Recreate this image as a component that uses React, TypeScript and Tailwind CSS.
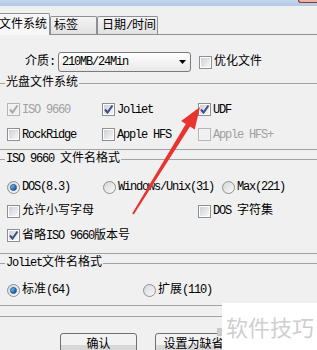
import type { ReactNode } from "react";
import clsx from "clsx";

// latin runs: mono at 6px per char, like the dialog's bitmap font
const M = ({ children }: { children: ReactNode }) => (
  <span className="tracking-[-1.2px]">{children}</span>
);

const CheckBox = ({ checked = false, disabled = false }: { checked?: boolean; disabled?: boolean }) => (
  <span
    className={clsx(
      "relative flex h-[13px] w-[13px] shrink-0 items-center justify-center border",
      disabled ? "border-[#b5b5b5] bg-[#f4f4f4]" : "border-[#8e8f8f] bg-white"
    )}
  >
    <span
      className={clsx(
        "h-[9px] w-[9px]",
        disabled ? "bg-[#f0f0f0]" : "bg-linear-to-br from-[#cdd0d4] to-[#f8f8f8]"
      )}
    />
    {checked && (
      <svg viewBox="0 0 13 13" className="absolute -left-px -top-px h-[13px] w-[13px]">
        <path
          d="M3 6.5 L5.5 9.5 L10.5 2.5"
          fill="none"
          stroke={disabled ? "#a9a9a9" : "#3b4e86"}
          strokeWidth="2"
        />
      </svg>
    )}
  </span>
);

const Radio = ({ selected = false }: { selected?: boolean }) => (
  <span className="flex h-[13px] w-[13px] shrink-0 items-center justify-center rounded-full border border-[#8e8f8f] bg-linear-to-br from-[#d3d5d8] to-[#fbfbfb]">
    {selected && (
      <span className="h-[7px] w-[7px] rounded-full border border-[#1c4f8a] bg-linear-to-br from-[#a9d3f5] via-[#3a86cf] to-[#154f93]" />
    )}
  </span>
);

const Option = ({
  control,
  children,
  className,
  muted,
}: {
  control: ReactNode;
  children: ReactNode;
  className?: string;
  muted?: boolean;
}) => (
  <div className={clsx("flex items-center gap-[2px]", muted && "text-[#a0a0a0]", className)}>
    {control}
    <span className="whitespace-nowrap">{children}</span>
  </div>
);

const Group = ({ title, className, children }: { title: ReactNode; className?: string; children: ReactNode }) => (
  <fieldset className={clsx("border-y border-[#a3a3a3]", className)}>
    <legend className="ml-[5px] px-px leading-[16px]">{title}</legend>
    {children}
  </fieldset>
);

const Button = ({ children }: { children: ReactNode }) => (
  <button className="flex h-[23px] w-[77px] items-center justify-center rounded-[3px] border border-[#707070] bg-linear-to-b from-[#f2f2f2] from-50% to-[#d8d8d8] to-50%">
    {children}
  </button>
);

export default function App() {
  return (
    <div className="relative h-[350px] w-[317px] overflow-hidden bg-[#f0f0f0] font-['Liberation_Mono','Noto_Sans_CJK_SC',monospace] text-[12px] leading-[16px] text-black">
      {/* bottom of the window title bar */}
      <div className="h-[6px] bg-linear-to-b from-[#c3d7ee] to-[#b2c9e4]" />
      <div className="absolute right-0 top-0 h-[3px] w-[19px] rounded-bl-[3px] border-b border-l border-[#8e3b33] bg-[#e9b3a8]" />

      {/* tabs */}
      <div className="flex h-[29px] items-end whitespace-nowrap border-b border-[#8e8f94]">
        <div className="relative z-10 -mb-px -ml-[9px] h-[22px] w-[59px] rounded-t-[2px] border border-b-0 border-[#8e8f94] bg-[#f7f7f7] pl-[7px] pt-[3px]">
          文件系统
        </div>
        <div className="flex h-[18px] w-[47px] items-center rounded-t-[2px] border border-b-0 border-[#8e8f94] bg-linear-to-b from-[#f4f4f4] to-[#e1e1e1] pl-[3px]">
          标签
        </div>
        <div className="flex h-[18px] w-[61px] items-center overflow-hidden rounded-t-[2px] border border-b-0 border-[#8e8f94] bg-linear-to-b from-[#f4f4f4] to-[#e1e1e1] pl-[4px]">
          日期<M>/</M>时间
        </div>
      </div>

      {/* tab page */}
      <div className="pt-[17px]">
        <div className="flex h-[20px] items-center">
          <span className="ml-[25px] w-[33px]">介质:</span>
          <div className="flex h-[20px] w-[133px] items-center justify-between rounded-[3px] border border-[#7b7b7b] bg-linear-to-b from-white to-[#e9e9e9] pl-[3px] pr-[4px]">
            <M>210MB/24Min</M>
            <svg width="7" height="4" viewBox="0 0 7 4">
              <path d="M0 0 H7 L3.5 4 Z" fill="#000" />
            </svg>
          </div>
          <Option className="ml-[8px]" control={<CheckBox />}>
            优化文件
          </Option>
        </div>

        <Group title="光盘文件系统" className="mt-[3px]">
          <div className="pb-[2px] pl-[7px] pt-[6px]">
            <div className="flex h-[25px] items-center">
              <Option className="w-[95px]" muted control={<CheckBox checked disabled />}>
                <M>ISO 9660</M>
              </Option>
              <Option className="w-[96px]" control={<CheckBox checked />}>
                <M>Joliet</M>
              </Option>
              <Option control={<CheckBox checked />}>
                <M>UDF</M>
              </Option>
            </div>
            <div className="flex h-[25px] items-center">
              <Option className="w-[95px]" control={<CheckBox />}>
                <M>RockRidge</M>
              </Option>
              <Option className="w-[96px]" control={<CheckBox />}>
                <M>Apple HFS</M>
              </Option>
              <Option muted control={<CheckBox disabled />}>
                <M>Apple HFS+</M>
              </Option>
            </div>
          </div>
        </Group>

        <Group
          title={
            <>
              <M>ISO 9660 </M>文件名格式
            </>
          }
          className="mt-px"
        >
          <div className="pb-[5px] pl-[7px] pt-[8px]">
            <div className="flex h-[24px] items-center">
              <Option className="w-[96px]" control={<Radio selected />}>
                <M>DOS(8.3)</M>
              </Option>
              <Option className="w-[119px]" control={<Radio />}>
                <M>Windows/Unix(31)</M>
              </Option>
              <Option control={<Radio />}>
                <M>Max(221)</M>
              </Option>
            </div>
            <div className="flex h-[24px] items-center">
              <Option className="w-[191px]" control={<CheckBox />}>
                允许小写字母
              </Option>
              <Option control={<CheckBox />}>
                <M>DOS </M>字符集
              </Option>
            </div>
            <div className="flex h-[25px] items-center">
              <Option control={<CheckBox checked />}>
                省略<M>ISO 9660</M>版本号
              </Option>
            </div>
          </div>
        </Group>

        <Group
          title={
            <>
              <M>Joliet</M>文件名格式
            </>
          }
          className="mt-px"
        >
          <div className="pb-[3px] pl-[7px] pt-[7px]">
            <div className="flex h-[24px] items-center">
              <Option className="w-[136px]" control={<Radio selected />}>
                标准<M>(64)</M>
              </Option>
              <Option control={<Radio />}>
                扩展<M>(110)</M>
              </Option>
            </div>
          </div>
        </Group>

        <div className="mt-[10px] border-t border-[#a3a3a3]" />
      </div>

      <div className="mt-[16px] flex gap-[18px] pl-[60px]">
        <Button>确认</Button>
        <Button>设置为缺省</Button>
      </div>

      {/* annotation arrow */}
      <svg className="pointer-events-none absolute left-0 top-0" width="317" height="350" viewBox="0 0 317 350">
        <polygon
          points="132.2,213.5 185.8,123.9 181.1,121 200,107 194.7,129.4 190,126.5 133.8,214.5"
          fill="#e8332e"
        />
      </svg>

      {/* watermark */}
      <div className="absolute bottom-0 right-0 h-[47px] w-[95px] bg-white pl-[4px] pt-[12px] font-['Noto_Sans_CJK_SC',sans-serif] text-[22px] leading-[22px] text-[#cfcfcf]">
        软件技巧
        <span className="absolute -left-[5px] top-[25px] h-[8px] w-[5px] bg-[#cacaca]" />
      </div>
    </div>
  );
}
